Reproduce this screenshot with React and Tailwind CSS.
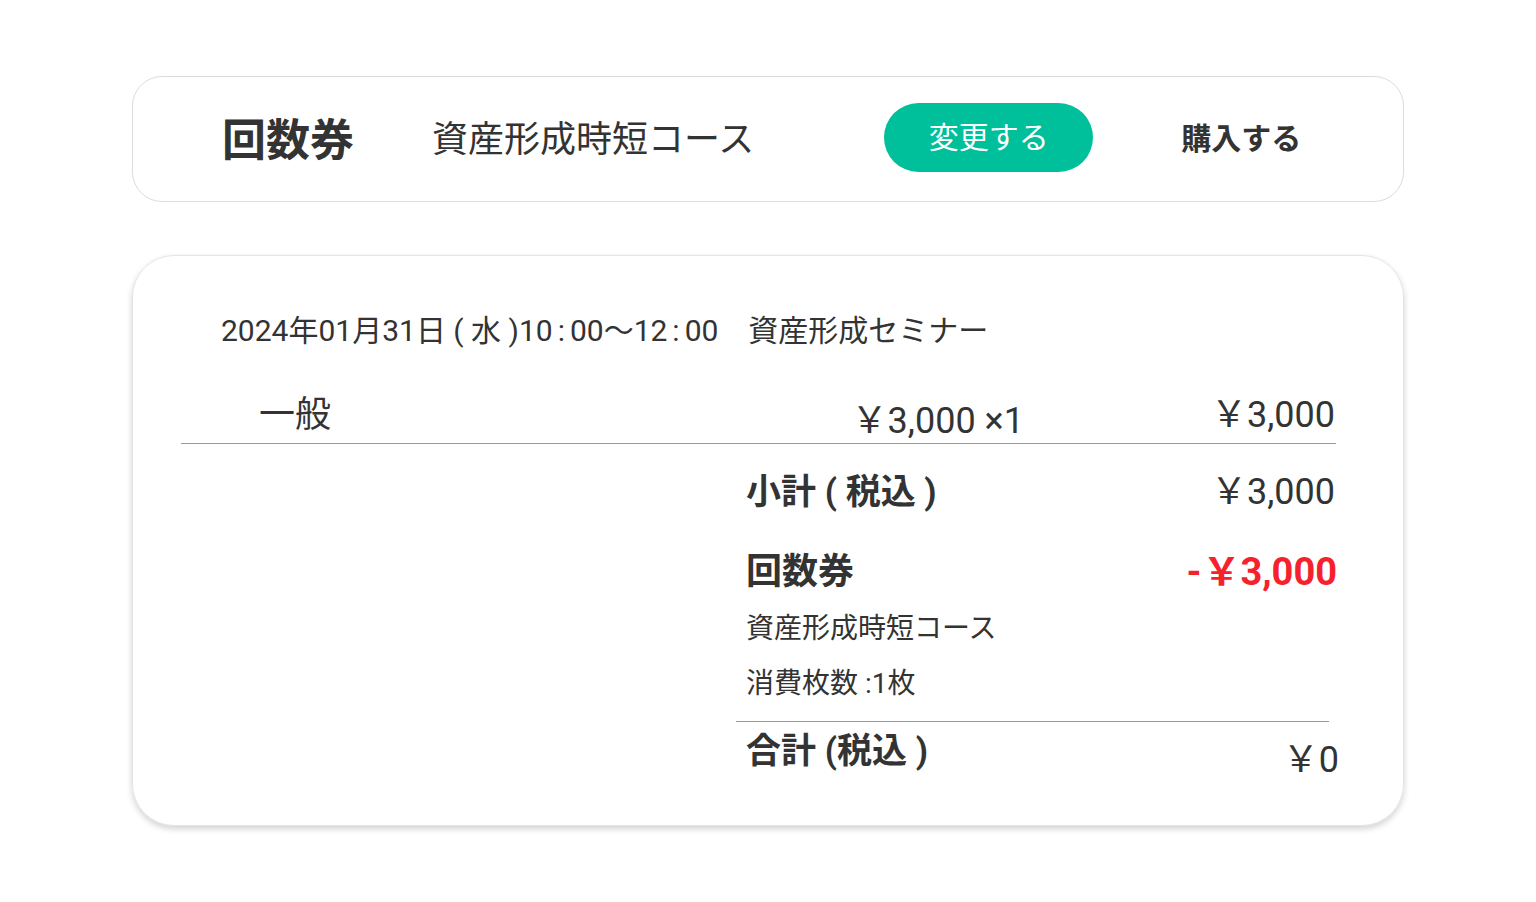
import React from 'react';

const font = { fontFamily: 'Roboto, "Noto Sans CJK JP", sans-serif' };

const App = () => {
  return (
    <div className="min-h-screen w-full bg-white text-[#333]" style={font}>
      <div className="w-[1272px] ml-[132px] pt-[76px]">
        {/* Ticket summary */}
        <div className="h-[126px] rounded-[30px] border border-[#dcdcdc] flex items-center pl-[89px]">
          <h1 className="text-[44px] font-bold leading-none mt-[3px]">回数券</h1>
          <p className="ml-[78px] text-[36px] leading-none mt-[2px]">資産形成時短コース</p>
          <button className="ml-[130px] mb-[3px] w-[209px] h-[69px] rounded-full bg-[#00bf9b] text-white text-[30px] leading-none">変更する</button>
          <button className="ml-[88px] text-[30px] font-bold leading-none">購入する</button>
        </div>

        {/* Order detail */}
        <div className="mt-[53px] h-[571px] rounded-[42px] border border-[#e4e4e4] shadow-[0_3px_6px_rgba(0,0,0,0.18)] pt-[60px] pl-[48px] pr-[67px]">
          <p className="ml-[40px] text-[30px] leading-none h-[30px] flex items-center">
            2024年01月31日 ( 水 )10<span className="mx-[5px]">:</span>00〜12<span className="mx-[5px]">:</span>00
            <span className="ml-[30px]">資産形成セミナー</span>
          </p>

          <div className="mt-[50px] flex items-end h-[48px] border-b border-[#999] pb-[10px]">
            <span className="ml-[78px] text-[36px] leading-none">一般</span>
            <span className="ml-auto text-[36px] leading-none mb-[-6px]">￥3,000 ×1</span>
            <span className="ml-[187px] mr-[1px] text-[36px] leading-none">￥3,000</span>
          </div>

          <div className="ml-[565px] mr-[1px]">
            <div className="mt-[28px] flex items-center justify-between h-[40px]">
              <span className="text-[35px] font-bold leading-none">小計 ( 税込 )</span>
              <span className="text-[36px] leading-none">￥3,000</span>
            </div>
            <div className="mt-[40px] flex items-center justify-between h-[40px]">
              <span className="text-[36px] font-bold leading-none">回数券</span>
              <span className="text-[38px] font-bold leading-none text-[#f5222d] -mr-[2px]">
                -<span className="ml-[1px]">￥3,000</span>
              </span>
            </div>
            <p className="mt-[22px] text-[28px] leading-none h-[30px] flex items-center">資産形成時短コース</p>
            <p className="mt-[25px] text-[28px] leading-none h-[30px] flex items-center">消費枚数 :1枚</p>
            <div className="mt-[22px] -ml-[10px] mr-[6px] border-t border-[#999]" />
            <div className="mt-[12px] flex items-start justify-between h-[50px]">
              <span className="text-[35px] font-bold leading-none">合計 (税込 )</span>
              <span className="text-[36px] leading-none mt-[8px] -mr-[4px]">￥0</span>
            </div>
          </div>
        </div>
      </div>
    </div>
  );
};

export default App;
